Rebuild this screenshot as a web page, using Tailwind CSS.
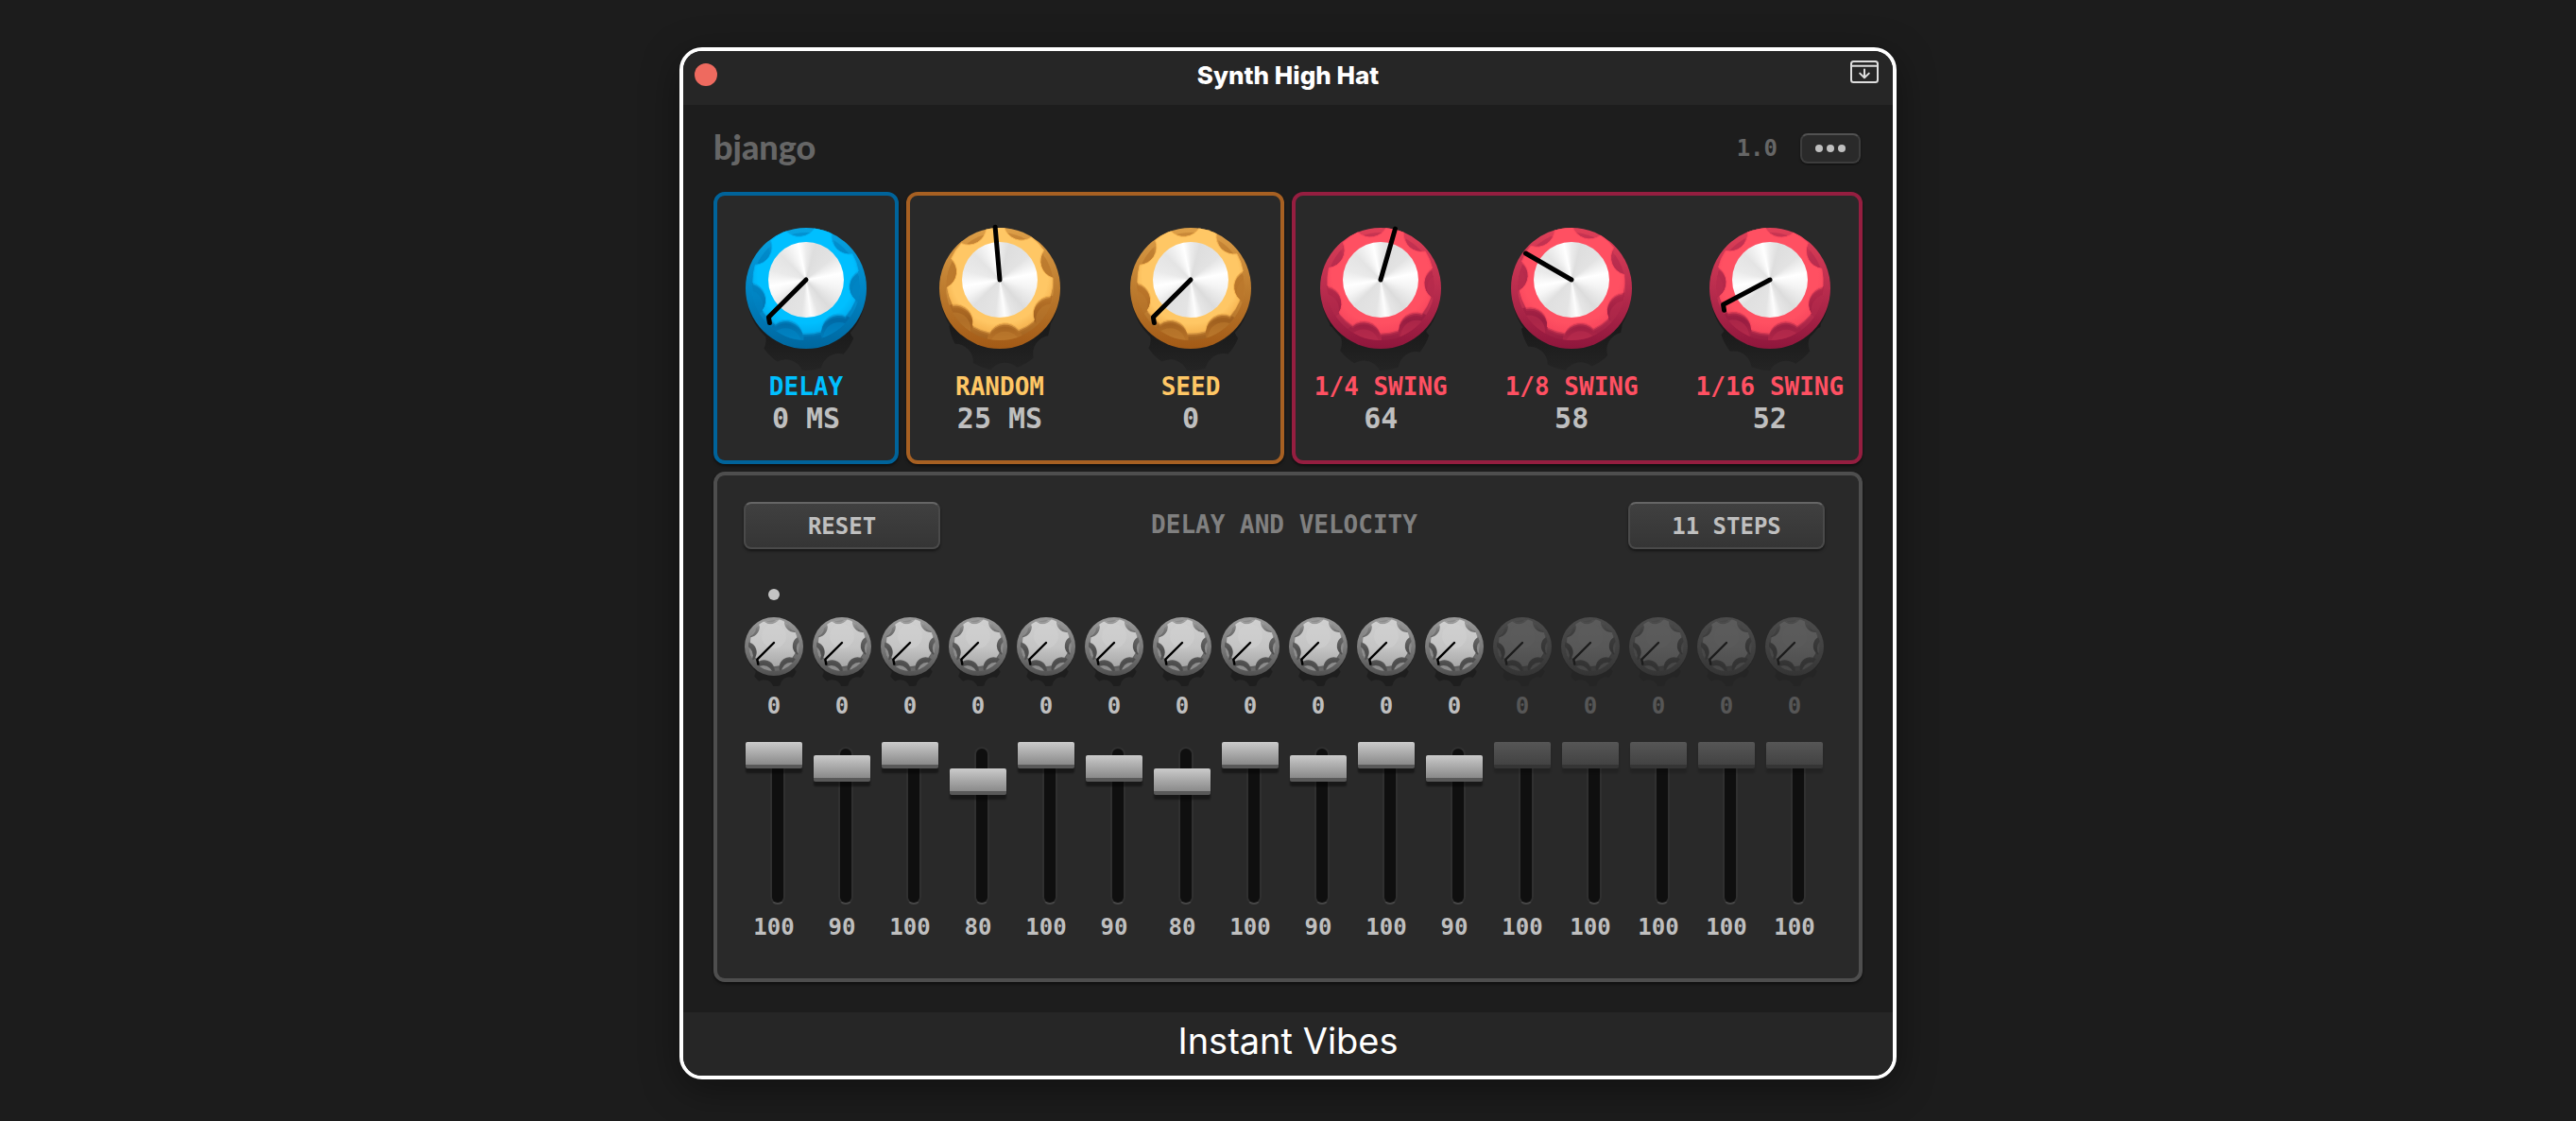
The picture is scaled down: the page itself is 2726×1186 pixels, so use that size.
<!DOCTYPE html>
<html lang="en">

<head>
    <meta charset="UTF-8">
    <meta name="viewport" content="width=device-width, initial-scale=1.0">
    <title>Synth High Hat</title>
    <script src="https://cdn.jsdelivr.net/npm/@tailwindcss/browser@4"></script>
</head>

<body class="min-h-screen bg-[#1c1c1c] px-4 pt-[50px] pb-10 font-['Inter',sans-serif]">
    <div class="w-full max-w-[1288px] mx-auto border-4 border-white rounded-[24px] bg-[#1d1d1d] overflow-hidden shadow-[0_10px_40px_rgba(0,0,0,0.4)]">

        <!-- Title bar -->
        <header class="h-[57px] pb-[7px] px-3 bg-[#262626] grid grid-cols-3 items-center">
            <button aria-label="Close" class="size-6 rounded-full bg-[#ee6a5f]"></button>
            <h1 class="pt-0.5 text-center text-[26px] leading-8 font-extrabold text-white whitespace-nowrap">Synth High Hat</h1>
            <button aria-label="Collapse window" class="justify-self-end pb-1.5 pr-[3px]">
                <svg width="30" height="24" viewBox="0 0 30 24" fill="none" stroke="#dedede" stroke-width="2">
                    <rect x="1" y="1" width="28" height="22" rx="2.5" />
                    <path d="M1 5.7H29" />
                    <path d="M15 9.5V17.5M10.2 13.6L15 18.2L19.8 13.6" stroke-linejoin="round" stroke-linecap="round" />
                </svg>
            </button>
        </header>

        <main class="px-8 pb-8 font-['DejaVu_Sans_Mono',monospace] font-bold text-[#bfbfbf]">
            <div class="h-[92px] pr-0.5 flex items-center justify-between">
                <div class="pb-1 font-['Lato',sans-serif] font-black text-[36px] leading-10 text-[#666666]">bjango</div>
                <div class="flex items-center gap-6">
                    <span class="text-[24px] leading-8 text-[#666666]">1.0</span>
                    <button aria-label="Menu" class="w-16 h-8 rounded-lg border-2 border-[#3d3d3d] border-t-[#525252] bg-[#2a2a2a] flex items-center justify-center gap-1 shadow-[0_1px_2px_rgba(0,0,0,0.6)]">
                        <span class="size-2 rounded-full bg-[#bfbfbf]"></span>
                        <span class="size-2 rounded-full bg-[#bfbfbf]"></span>
                        <span class="size-2 rounded-full bg-[#bfbfbf]"></span>
                    </button>
                </div>
            </div>

            <!-- Main knobs -->
            <div class="flex gap-2">
                <section id="delayPanel" class="grow basis-[196px] flex justify-center pt-[34px] pb-[26px] rounded-xl border-4 border-[#00639a] bg-[#292929] shadow-[0_2px_3px_rgba(0,0,0,0.5)] text-[#00bfff]"></section>
                <section id="randomPanel" class="grow basis-[400px] flex justify-center gap-[74px] pt-[34px] pb-[26px] rounded-xl border-4 border-[#a76022] bg-[#292929] shadow-[0_2px_3px_rgba(0,0,0,0.5)] text-[#ffc765]"></section>
                <section id="swingPanel" class="grow basis-[604px] flex justify-center gap-[61px] pt-[34px] pb-[26px] pl-1 rounded-xl border-4 border-[#951e40] bg-[#292929] shadow-[0_2px_3px_rgba(0,0,0,0.5)] text-[#ff5062]"></section>
            </div>

            <!-- Steps -->
            <section class="mt-2 pl-6 pr-8 pt-7 pb-[38px] rounded-xl border-4 border-[#4e4e4e] bg-[#292929] shadow-[0_2px_3px_rgba(0,0,0,0.5)]">
                <div class="px-1 flex items-center justify-between">
                    <button class="w-52 h-[50px] rounded-lg border-2 border-[#4a4a4a] border-t-[#666666] bg-linear-to-b from-[#404040] to-[#353535] pt-0.5 text-[24px] leading-8 shadow-[0_2px_3px_rgba(0,0,0,0.5)]">RESET</button>
                    <h2 class="text-[26px] leading-8 pb-0.5 text-[#808080]">DELAY AND VELOCITY</h2>
                    <button class="w-52 h-[50px] rounded-lg border-2 border-[#4a4a4a] border-t-[#666666] bg-linear-to-b from-[#404040] to-[#353535] pt-0.5 text-[24px] leading-8 shadow-[0_2px_3px_rgba(0,0,0,0.5)]">11 STEPS</button>
                </div>
                <div id="steps" class="mt-[42px] grid grid-cols-16"></div>
            </section>
        </main>

        <footer class="h-[67px] pb-2 bg-[#262626] flex items-center justify-center text-[38px] leading-[48px] text-white">Instant Vibes</footer>
    </div>

    <script>
        const palettes = {
            blue: { face: '#00bfff', faceLow: '#00b0f2', ringTop: '#08a4e2', ring: '#0086c6', ringLow: '#00679f', wall: '#006aa6', wallLow: '#0080be' },
            orange: { face: '#ffc765', faceLow: '#f7b653', ringTop: '#dd9f48', ring: '#bd7c2f', ringLow: '#a35a16', wall: '#a0601f', wallLow: '#b87328' },
            red: { face: '#ff5062', faceLow: '#f9485e', ringTop: '#df4058', ring: '#ba2d4e', ringLow: '#8f163c', wall: '#981d41', wallLow: '#b02648' }
        };

        const knobs = [
            { panel: 'delayPanel', label: 'DELAY', text: '0 MS', value: 0, max: 100, angle: 135, color: 'blue' },
            { panel: 'randomPanel', label: 'RANDOM', text: '25 MS', value: 25, max: 50, angle: 265, color: 'orange' },
            { panel: 'randomPanel', label: 'SEED', text: '0', value: 0, max: 100, angle: 135, color: 'orange' },
            { panel: 'swingPanel', label: '1/4 SWING', text: '64', value: 64, max: 100, angle: 286, color: 'red' },
            { panel: 'swingPanel', label: '1/8 SWING', text: '58', value: 58, max: 100, angle: 210, color: 'red' },
            { panel: 'swingPanel', label: '1/16 SWING', text: '52', value: 52, max: 100, angle: 152, color: 'red' }
        ];

        const velocities = [100, 90, 100, 80, 100, 90, 80, 100, 90, 100, 90, 100, 100, 100, 100, 100];
        const stepCount = 11;

        function point(cx, cy, radius, degrees) {
            const a = degrees * Math.PI / 180;
            return [cx + radius * Math.cos(a), cy + radius * Math.sin(a)];
        }

        // Disc with seven finger notches, the pointer sits halfway between two of them
        function gripPath(cx, cy, R, d, r, angle) {
            const half = Math.acos((R * R + d * d - r * r) / (2 * R * d)) * 180 / Math.PI;
            const gap = 360 / 7;
            let path = '';
            for (let i = 0; i < 7; i++) {
                const mid = angle + gap / 2 + gap * i;
                const a = point(cx, cy, R, mid - half);
                const b = point(cx, cy, R, mid + half);
                path += i === 0 ? `M${a}` : `A${R} ${R} 0 0 1 ${a}`;
                path += `A${r} ${r} 0 0 0 ${b}`;
            }
            const end = point(cx, cy, R, angle + gap / 2 - half);
            return path + `A${R} ${R} 0 0 1 ${end}Z`;
        }

        function notches(cx, cy, d, r, angle, fill) {
            let out = '';
            for (let i = 0; i < 7; i++) {
                const [x, y] = point(cx, cy, d, angle + 360 / 14 + i * 360 / 7);
                out += `<circle cx="${x}" cy="${y}" r="${r}" fill="${fill}"/>`;
            }
            return out;
        }

        function pointer(cx, cy, length, angle, width, drop) {
            const [x, y] = point(cx, cy, length, angle);
            const tip = Math.sin(angle * Math.PI / 180) > 0 ? `L${x + 1} ${y + drop}` : '';
            return `<path d="M${cx} ${cy}L${x} ${y}${tip}" fill="none" stroke="#000" stroke-width="${width}" stroke-linecap="round" stroke-linejoin="round"/>`;
        }

        function bigKnob(knob, id) {
            const p = palettes[knob.color];
            const grip = gripPath(64, 55, 56, 65, 19, knob.angle);
            return `
                <svg class="block overflow-visible" width="128" height="128" viewBox="0 0 128 128" aria-hidden="true">
                    <defs>
                        <linearGradient id="ring${id}" x1="0" y1="0" x2="0" y2="1">
                            <stop offset="0" stop-color="${p.ringTop}"/><stop offset="0.5" stop-color="${p.ring}"/><stop offset="1" stop-color="${p.ringLow}"/>
                        </linearGradient>
                        <linearGradient id="wall${id}" gradientUnits="userSpaceOnUse" x1="0" y1="0" x2="0" y2="120">
                            <stop offset="0" stop-color="${p.ringTop}"/><stop offset="0.3" stop-color="${p.ring}"/><stop offset="0.6" stop-color="${p.wallLow}"/><stop offset="0.82" stop-color="${p.wall}"/><stop offset="1" stop-color="${p.wallLow}"/>
                        </linearGradient>
                        <linearGradient id="side${id}" gradientUnits="userSpaceOnUse" x1="0" y1="0" x2="0" y2="120">
                            <stop offset="0" stop-color="${p.ringTop}"/><stop offset="0.4" stop-color="${p.ringTop}"/><stop offset="0.75" stop-color="${p.ring}"/><stop offset="1" stop-color="${p.wall}"/>
                        </linearGradient>
                        <radialGradient id="face${id}" gradientUnits="userSpaceOnUse" cx="64" cy="50" r="60">
                            <stop offset="0.85" stop-color="${p.face}"/><stop offset="1" stop-color="${p.faceLow}"/>
                        </radialGradient>
                        <linearGradient id="shade${id}" x1="0" y1="0" x2="0" y2="1">
                            <stop offset="0.6" stop-color="#1a1a1a"/><stop offset="1" stop-color="#242424"/>
                        </linearGradient>
                        <clipPath id="rim${id}"><circle cx="64" cy="64" r="64"/></clipPath>
                        <clipPath id="body${id}"><circle cx="64" cy="62" r="57"/></clipPath>
                    </defs>
                    <circle cx="64" cy="69" r="63" fill="#1c1c1c"/>
                    <path d="${gripPath(64, 97, 54, 65, 19, knob.angle)}" fill="url(#shade${id})"/>
                    <circle cx="64" cy="64" r="64" fill="url(#ring${id})"/>
                    <g clip-path="url(#rim${id})">
                        <circle cx="64" cy="62" r="57" fill="url(#side${id})"/>
                        <g clip-path="url(#body${id})">
                            ${notches(64, 55, 65, 19, knob.angle, `url(#wall${id})`)}
                            ${notches(64, 61, 66, 17, knob.angle, p.ring).replaceAll('/>', ' opacity="0.55"/>')}
                        </g>
                        <path d="${grip}" transform="translate(0 4)" fill="${p.ring}" opacity="0.5"/>
                        <path d="${grip}" transform="translate(0 2)" fill="${p.ringTop}" opacity="0.8"/>
                        <path d="${grip}" fill="url(#face${id})" stroke="${p.faceLow}" stroke-width="1" stroke-linejoin="round"/>
                    </g>
                    <foreignObject x="24" y="15" width="80" height="80">
                        <div class="size-20 rounded-full bg-[conic-gradient(#ececec_0deg,#dedede_15deg,#e3e3e3_50deg,#ffffff_80deg,#f4f4f4_105deg,#dcdcdc_140deg,#e6e6e6_160deg,#fdfdfd_172deg,#e4e4e4_188deg,#e0e0e0_225deg,#f6f6f6_245deg,#ffffff_260deg,#eaeaea_285deg,#e4e4e4_315deg,#ffffff_348deg,#ececec_360deg)]"></div>
                    </foreignObject>
                    ${pointer(64, 55, 56, knob.angle, 5, 6)}
                </svg>`;
        }

        function stepKnob() {
            const grip = gripPath(31, 27, 25, 31, 11, 135);
            return `
                <svg class="block overflow-visible" width="62" height="62" viewBox="0 0 62 62" aria-hidden="true">
                    <circle cx="31" cy="34" r="30" fill="#1c1c1c"/>
                    <path d="${gripPath(31, 47, 26, 31, 10, 135)}" fill="#1e1e1e"/>
                    <circle cx="31" cy="31" r="31" fill="url(#stepRing)"/>
                    <circle cx="31" cy="30" r="27" fill="url(#stepSide)"/>
                    <g clip-path="url(#stepBody)">
                        ${notches(31, 27, 31, 11, 135, 'url(#stepWall)')}
                        ${notches(31, 29, 34, 10, 135, '#8c8c8c')}
                    </g>
                    <path d="${grip}" transform="translate(0 2)" fill="#5a5a5a" opacity="0.6"/>
                    <path d="${grip}" fill="url(#stepFace)"/>
                    <circle cx="31" cy="20" r="13" fill="#d2d2d2" opacity="0.5"/>
                    ${pointer(31, 27, 25, 135, 2.4, 5)}
                </svg>`;
        }

        knobs.forEach((knob, i) => {
            document.getElementById(knob.panel).innerHTML += `
                <div class="min-w-32 flex flex-col items-center">
                    <div class="relative">
                        ${bigKnob(knob, i)}
                        <input id="knob${i}" type="range" min="0" max="${knob.max}" value="${knob.value}" class="absolute inset-0 size-full opacity-0 cursor-pointer">
                    </div>
                    <label for="knob${i}" class="relative mt-6 text-[26px] leading-8 whitespace-nowrap">${knob.label}</label>
                    <output for="knob${i}" class="text-[30px] leading-9 whitespace-nowrap text-[#bfbfbf]">${knob.text}</output>
                </div>
            `;
        });

        document.getElementById('steps').innerHTML = velocities.map((velocity, i) => {
            const on = i < stepCount;
            return `
                <div class="flex flex-col items-center text-[24px] leading-8">
                    <span class="size-3 rounded-full ${i === 0 ? 'bg-[#c4c4c4]' : ''}"></span>
                    <div class="relative mt-[18px] ${on ? '' : 'opacity-30'}">
                        ${stepKnob()}
                        <input type="range" aria-label="Step ${i + 1} delay" min="0" max="100" value="0" class="absolute inset-0 size-full opacity-0 cursor-pointer" ${on ? '' : 'disabled'}>
                    </div>
                    <output class="mt-4 ${on ? '' : 'text-[#565656]'}">0</output>
                    <div class="relative mt-[22px] h-[168px] w-[60px]">
                        <div class="absolute top-[5px] left-1/2 -ml-1 w-4 h-[167px] rounded-lg border-2 border-[#303030] border-b-[#464646] bg-[#0f0f0f]"></div>
                        <input type="range" aria-label="Step ${i + 1} velocity" min="0" max="100" value="${velocity}" ${on ? '' : 'disabled'}
                            class="relative block h-full w-full appearance-none bg-transparent [writing-mode:vertical-lr] [direction:rtl] [&::-webkit-slider-thumb]:appearance-none [&::-webkit-slider-thumb]:h-7 [&::-webkit-slider-thumb]:w-[60px] [&::-webkit-slider-thumb]:rounded-[2px] [&::-webkit-slider-thumb]:border-b-4 ${on
                                ? '[&::-webkit-slider-thumb]:border-[#595959] [&::-webkit-slider-thumb]:bg-linear-to-b [&::-webkit-slider-thumb]:from-[#cbcbcb] [&::-webkit-slider-thumb]:to-[#8a8a8a] [&::-webkit-slider-thumb]:shadow-[0_5px_2px_rgba(0,0,0,0.4)]'
                                : '[&::-webkit-slider-thumb]:border-[#353535] [&::-webkit-slider-thumb]:bg-linear-to-b [&::-webkit-slider-thumb]:from-[#565656] [&::-webkit-slider-thumb]:to-[#434343] [&::-webkit-slider-thumb]:shadow-[0_5px_2px_rgba(0,0,0,0.15)]'}">
                    </div>
                    <output class="mt-3">${velocity}</output>
                </div>
            `;
        }).join('');
    </script>

    <!-- Shared fills for the step knobs -->
    <svg width="0" height="0" class="absolute" aria-hidden="true">
        <defs>
            <linearGradient id="stepRing" x1="0" y1="0" x2="0" y2="1">
                <stop offset="0" stop-color="#9a9a9a" /><stop offset="0.5" stop-color="#7c7c7c" /><stop offset="1" stop-color="#505050" />
            </linearGradient>
            <linearGradient id="stepSide" x1="0" y1="0" x2="0" y2="1">
                <stop offset="0" stop-color="#c0c0c0" /><stop offset="0.5" stop-color="#707070" /><stop offset="1" stop-color="#666666" />
            </linearGradient>
            <linearGradient id="stepWall" gradientUnits="userSpaceOnUse" x1="0" y1="0" x2="0" y2="58">
                <stop offset="0" stop-color="#b4b4b4" /><stop offset="0.25" stop-color="#747474" /><stop offset="0.6" stop-color="#505050" /><stop offset="1" stop-color="#4c4c4c" />
            </linearGradient>
            <linearGradient id="stepFace" x1="0" y1="0" x2="0" y2="1">
                <stop offset="0" stop-color="#d0d0d0" /><stop offset="0.6" stop-color="#c4c4c4" /><stop offset="1" stop-color="#a8a8a8" />
            </linearGradient>
            <clipPath id="stepBody"><circle cx="31" cy="30" r="27" /></clipPath>
        </defs>
    </svg>
</body>

</html>
